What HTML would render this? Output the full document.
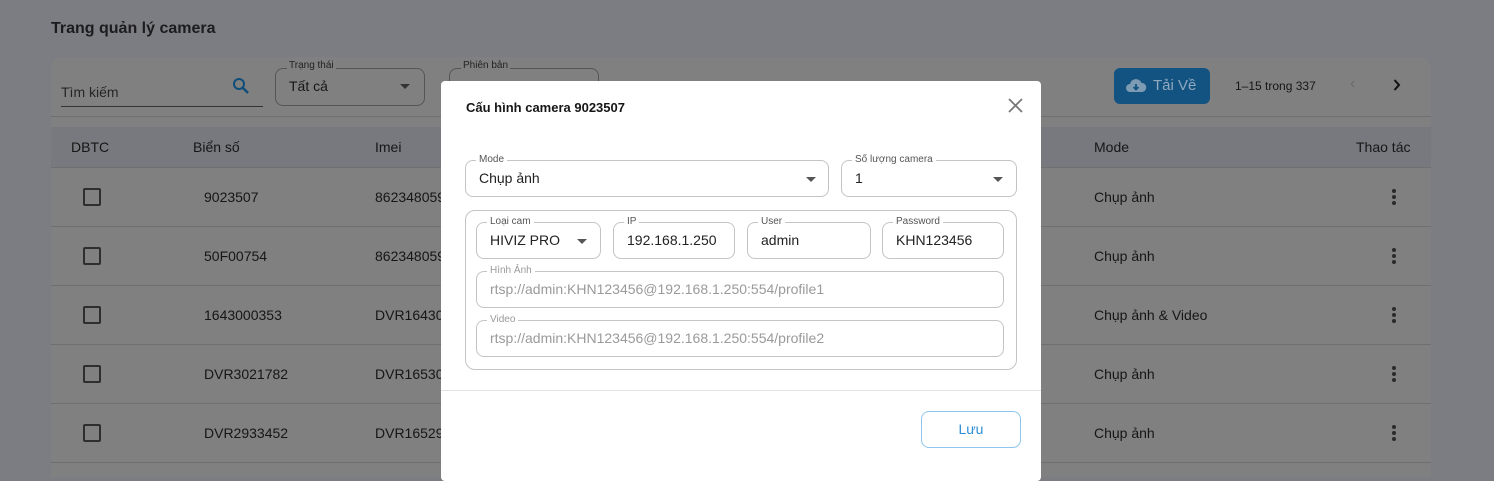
<!DOCTYPE html>
<html><head><meta charset="utf-8"><style>
*{box-sizing:border-box;margin:0;padding:0}
body{width:1494px;height:469px;overflow:hidden;background:#7c7d82;font-family:"Liberation Sans",sans-serif;position:relative;color:#111}
.abs{position:absolute}
.title{left:51px;top:20px;font-size:16px;font-weight:bold;color:#1c1c1e}
.card{left:51px;top:57px;width:1380px;height:420px;background:#808080;border-radius:12px 12px 0 0;overflow:hidden}
.hline{position:absolute;left:0;width:1380px;height:1px;background:#6f6f6f}
.hdr{position:absolute;left:0;top:70px;width:1380px;height:40px;background:#77797f}
.t{position:absolute;font-size:14px;color:#161616;white-space:nowrap}
.cb{position:absolute;width:18px;height:18px;border:2px solid #2e2e2e;border-radius:2px}
.dots{position:absolute;width:4px}
.dots i{display:block;width:4px;height:4px;border-radius:50%;background:#2a2a2a;margin-bottom:2px}
.ob{position:absolute;border:1px solid #555;border-radius:8px}
.lbl{position:absolute;font-size:10px;color:#222;background:#808080;padding:0 2px}
.modal{left:441px;top:81px;width:600px;height:400px;background:#fff;border-radius:4px}
.f{position:absolute;border:1px solid #c4c4c4;border-radius:8px}
.fl{position:absolute;top:-7px;left:10px;font-size:10px;color:#555;background:#fff;padding:0 3px;line-height:12px}
.fv{position:absolute;left:13px;top:9px;font-size:14px;color:#222;white-space:nowrap}
.arr{position:absolute;width:0;height:0;border-left:5px solid transparent;border-right:5px solid transparent;border-top:5px solid #555}
</style></head><body>
<div class="abs title">Trang quản lý camera</div>
<div class="abs card">
  <div class="t" style="left:10px;top:27px;color:#262626">Tìm kiếm</div>
  <div style="position:absolute;left:10px;top:49px;width:202px;height:1px;background:#333"></div>
  <svg style="position:absolute;left:181px;top:20px" width="18" height="18" viewBox="0 0 18 18"><circle cx="7" cy="7" r="5" fill="none" stroke="#0f4d7a" stroke-width="2"/><path d="M11 11 L16 16" stroke="#0f4d7a" stroke-width="2.4"/></svg>
  <div class="ob" style="left:224px;top:11px;width:150px;height:38px"></div>
  <div class="lbl" style="left:236px;top:3px">Trạng thái</div>
  <div class="t" style="left:238px;top:21px">Tất cả</div>
  <div class="arr" style="left:349px;top:27px;border-top-color:#333"></div>
  <div class="ob" style="left:398px;top:11px;width:150px;height:38px"></div>
  <div class="lbl" style="left:410px;top:3px">Phiên bản</div>
  <div style="position:absolute;left:1063px;top:11px;width:96px;height:36px;background:#135381;border-radius:6px"></div>
  <svg style="position:absolute;left:1074px;top:20px" width="22" height="18" viewBox="0 0 22 18"><path d="M5 15 A4 4 0 0 1 5 7 A6 6 0 0 1 16.5 6 A4.5 4.5 0 0 1 17 15 Z" fill="#7d9bb3"/><path d="M11 7 V12 M8.5 10 L11 12.5 L13.5 10" stroke="#135381" stroke-width="1.8" fill="none"/></svg>
  <div class="t" style="left:1102px;top:20px;color:#8fa9bf;font-size:15px">Tải Về</div>
  <div class="t" style="left:1184px;top:22px;font-size:12px">1–15 trong 337</div>
  <div class="t" style="left:1299px;top:18px;color:#6a6a6a;font-size:16px">‹</div>
  <svg style="position:absolute;left:1342px;top:22px" width="8" height="12" viewBox="0 0 8 12"><path d="M1.5 1 L6 6 L1.5 11" stroke="#111" stroke-width="2" fill="none"/></svg>
  <div class="hline" style="top:59px"></div>
  <div class="hdr"></div>
  <div class="t" style="left:20px;top:82px">DBTC</div>
  <div class="t" style="left:142px;top:82px">Biển số</div>
  <div class="t" style="left:324px;top:82px">Imei</div>
  <div class="t" style="left:1043px;top:82px">Mode</div>
  <div class="t" style="left:1305px;top:82px">Thao tác</div>
  <div class="hline" style="top:110px"></div>
  <div class="cb" style="left:32px;top:131px"></div><div class="t" style="left:153px;top:132px">9023507</div><div class="t" style="left:324px;top:132px">862348059</div><div class="t" style="left:1043px;top:132px">Chụp ảnh</div><div class="dots" style="left:1341px;top:132px"><i></i><i></i><i></i></div>
  <div class="hline" style="top:169px"></div>
  <div class="cb" style="left:32px;top:190px"></div><div class="t" style="left:153px;top:191px">50F00754</div><div class="t" style="left:324px;top:191px">862348059</div><div class="t" style="left:1043px;top:191px">Chụp ảnh</div><div class="dots" style="left:1341px;top:191px"><i></i><i></i><i></i></div>
  <div class="hline" style="top:228px"></div>
  <div class="cb" style="left:32px;top:249px"></div><div class="t" style="left:153px;top:250px">1643000353</div><div class="t" style="left:324px;top:250px">DVR16430</div><div class="t" style="left:1043px;top:250px">Chụp ảnh &amp; Video</div><div class="dots" style="left:1341px;top:250px"><i></i><i></i><i></i></div>
  <div class="hline" style="top:287px"></div>
  <div class="cb" style="left:32px;top:308px"></div><div class="t" style="left:153px;top:309px">DVR3021782</div><div class="t" style="left:324px;top:309px">DVR16530</div><div class="t" style="left:1043px;top:309px">Chụp ảnh</div><div class="dots" style="left:1341px;top:309px"><i></i><i></i><i></i></div>
  <div class="hline" style="top:346px"></div>
  <div class="cb" style="left:32px;top:367px"></div><div class="t" style="left:153px;top:368px">DVR2933452</div><div class="t" style="left:324px;top:368px">DVR16529</div><div class="t" style="left:1043px;top:368px">Chụp ảnh</div><div class="dots" style="left:1341px;top:368px"><i></i><i></i><i></i></div>
  <div class="hline" style="top:405px"></div>
</div>
<div class="abs modal">
  <div class="t" style="left:25px;top:19px;font-size:13px;font-weight:bold">Cấu hình camera 9023507</div>
  <svg style="position:absolute;left:567px;top:17px" width="15" height="15" viewBox="0 0 15 15"><path d="M1 1 L14 14 M14 1 L1 14" stroke="#777" stroke-width="1.8"/></svg>
  <div class="f" style="left:24px;top:79px;width:364px;height:37px"><span class="fl">Mode</span><span class="fv">Chụp ảnh</span><div class="arr" style="left:340px;top:16px"></div></div>
  <div class="f" style="left:400px;top:79px;width:176px;height:37px"><span class="fl">Số lượng camera</span><span class="fv">1</span><div class="arr" style="left:151px;top:16px"></div></div>
  <div class="f" style="left:24px;top:129px;width:552px;height:160px;border-radius:10px"></div>
  <div class="f" style="left:35px;top:141px;width:125px;height:37px"><span class="fl">Loại cam</span><span class="fv">HIVIZ PRO</span><div class="arr" style="left:100px;top:16px"></div></div>
  <div class="f" style="left:172px;top:141px;width:122px;height:37px"><span class="fl">IP</span><span class="fv">192.168.1.250</span></div>
  <div class="f" style="left:306px;top:141px;width:124px;height:37px"><span class="fl">User</span><span class="fv">admin</span></div>
  <div class="f" style="left:441px;top:141px;width:122px;height:37px"><span class="fl">Password</span><span class="fv">KHN123456</span></div>
  <div class="f" style="left:35px;top:190px;width:528px;height:37px"><span class="fl" style="color:#999">Hình Ảnh</span><span class="fv" style="color:#9a9a9a">rtsp://admin:KHN123456@192.168.1.250:554/profile1</span></div>
  <div class="f" style="left:35px;top:239px;width:528px;height:37px"><span class="fl" style="color:#999">Video</span><span class="fv" style="color:#9a9a9a">rtsp://admin:KHN123456@192.168.1.250:554/profile2</span></div>
  <div style="position:absolute;left:0;top:309px;width:600px;height:1px;background:#e2e2e2"></div>
  <div style="position:absolute;left:480px;top:330px;width:100px;height:37px;border:1px solid #8ec6ec;border-radius:8px;color:#2d8fd5;font-size:14px;text-align:center;line-height:35px">Lưu</div>
</div>
</body></html>
